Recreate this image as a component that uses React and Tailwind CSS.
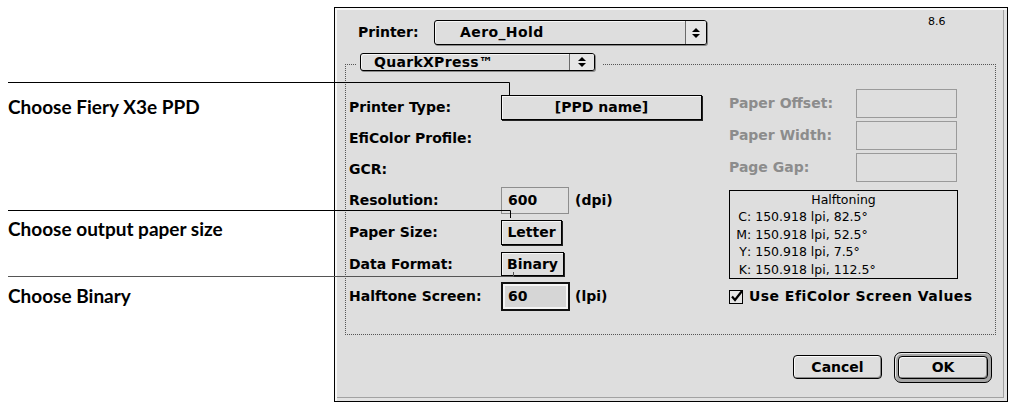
import React from 'react';

const ui = "font-['DejaVu_Sans',sans-serif] font-bold text-[14px] text-black";
const small = "font-['DejaVu_Sans',sans-serif] text-[12.5px] text-black";

function Arrows() {
  return (
    <svg width="8" height="12" viewBox="0 0 8 12">
      <polygon points="0,5 4,1 8,5" fill="#000" />
      <polygon points="0,7 4,11 8,7" fill="#000" />
    </svg>
  );
}

function Popup({ label, w, h, pad, arrowW }) {
  return (
    <div
      className={`flex ${w} ${h} rounded-[3px] border border-black bg-[#dedede] shadow-[1px_1px_0_#8a8a8a,inset_1px_1px_0_#f6f6f6]`}
    >
      <div className={`flex flex-1 items-center ${pad} ${ui}`}>{label}</div>
      <div className={`flex ${arrowW} items-center justify-center rounded-r-[2px] border-l border-[#6a6a6a] bg-[#e6e6e6]`}>
        <Arrows />
      </div>
    </div>
  );
}

function PushButton({ label, w, h }) {
  return (
    <div
      className={`flex ${w} ${h} items-center justify-center border border-black bg-[#dedede] shadow-[1px_1px_0_#222,inset_1px_1px_0_#f6f6f6] ${ui}`}
    >
      {label}
    </div>
  );
}

function Row({ h, label, children }) {
  return (
    <div className={`flex ${h} items-center`}>
      <div className={`w-[152px] ${ui}`}>{label}</div>
      {children}
    </div>
  );
}

function GrayRow({ label }) {
  return (
    <div className="flex h-[29px] items-center">
      <div className={`w-[127px] font-['DejaVu_Sans',sans-serif] text-[14px] font-bold text-[#8c8c8c]`}>{label}</div>
      <div className="h-[29px] w-[101px] border border-[#9a9a9a] bg-[#dedede]" />
    </div>
  );
}

function Screen({ k, v }) {
  return (
    <div className={`flex h-[17.5px] items-center ${small}`}>
      <span className="w-[17px] text-right">{k}</span>
      <span>: {v}</span>
    </div>
  );
}

export default function App() {
  return (
    <div className="relative flex h-[406px] w-[1012px] overflow-hidden bg-white">
      {/* callout labels */}
      <div className="w-[334px] shrink-0 pl-[8px] pt-[95px] font-['Lato',sans-serif] text-[19px] font-bold leading-[24px] text-black">
        <div>Choose Fiery X3e PPD</div>
        <div className="mt-[98px]">Choose output paper size</div>
        <div className="mt-[43px]">Choose Binary</div>
      </div>

      {/* dialog */}
      <div className="mt-[7px] flex h-[395px] w-[674px] shrink-0 flex-col border border-black bg-[#dedede] shadow-[inset_2px_2px_0_#f7f7f7,inset_-3px_-3px_0_#e2e2e2,inset_-4px_-4px_0_#a2a2a2]">
        <div className="flex pl-[23px]">
          <div className="flex pt-[12px]">
            <div className={`flex h-[25px] w-[76px] items-center ${ui}`}>Printer:</div>
            <Popup label="Aero_Hold" w="w-[273px]" h="h-[25px]" pad="pl-[25px] tracking-[0.4px]" arrowW="w-[21px]" />
          </div>
          <div className="ml-[221px] pt-[8px] font-['DejaVu_Sans',sans-serif] text-[11px] leading-[12px] text-black">8.6</div>
        </div>

        <div className="ml-[10px] mt-[19px] h-[271px] w-[651px] border border-dotted border-[#555]">
          <div className="-mt-[12px] ml-[11px] w-fit bg-[#dedede] pl-[3px] pr-[8px]">
            <Popup label="QuarkXPress™" w="w-[235px]" h="h-[18px]" pad="pl-[13px] tracking-[0.3px]" arrowW="w-[25px]" />
          </div>

          <div className="flex">
            <div className="w-[383px] pl-[3px] pt-[21px]">
              <Row h="h-[31px]" label="Printer Type:">
                <PushButton label="[PPD name]" w="w-[201px]" h="h-[25px]" />
              </Row>
              <Row h="h-[31px]" label="EfiColor Profile:" />
              <Row h="h-[30px]" label="GCR:" />
              <Row h="h-[32px]" label="Resolution:">
                <div className={`flex h-[27px] w-[68px] items-center border border-[#8e8e8e] bg-[#e0e0e0] pl-[6px] ${ui}`}>600</div>
                <span className={`ml-[6px] ${ui}`}>(dpi)</span>
              </Row>
              <Row h="h-[32px]" label="Paper Size:">
                <PushButton label="Letter" w="w-[61px]" h="h-[25px]" />
              </Row>
              <Row h="h-[32px]" label="Data Format:">
                <PushButton label="Binary" w="w-[63px]" h="h-[24px]" />
              </Row>
              <Row h="h-[32px]" label="Halftone Screen:">
                <div className={`flex h-[29px] w-[69px] items-center border-2 border-[#111] bg-[#d6d6d6] pl-[5px] shadow-[inset_0_0_0_2px_#f4f4f4] ${ui}`}>60</div>
                <span className={`ml-[5px] ${ui}`}>(lpi)</span>
              </Row>
            </div>

            <div className="pt-[18px]">
              <div className="flex flex-col gap-[3px]">
                <GrayRow label="Paper Offset:" />
                <GrayRow label="Paper Width:" />
                <GrayRow label="Page Gap:" />
              </div>
              <div className="mt-[8px] h-[89px] w-[229px] border border-black pt-[1px]">
                <div className={`flex h-[17px] items-center justify-center ${small}`}>Halftoning</div>
                <Screen k="C" v="150.918 lpi, 82.5°" />
                <Screen k="M" v="150.918 lpi, 52.5°" />
                <Screen k="Y" v="150.918 lpi, 7.5°" />
                <Screen k="K" v="150.918 lpi, 112.5°" />
              </div>
              <div className="mt-[9px] flex h-[16px] items-center">
                <svg width="15" height="15" viewBox="0 0 15 15">
                  <rect x="0.5" y="1.5" width="13" height="13" fill="#e6e6e6" stroke="#000" />
                  <path d="M3 7.5 L6 11 L13 2" fill="none" stroke="#000" strokeWidth="2.2" />
                </svg>
                <span className={`ml-[5px] tracking-[0.45px] ${ui}`}>Use EfiColor Screen Values</span>
              </div>
            </div>
          </div>
        </div>

        <div className="mt-[17px] flex items-start justify-end gap-[12px] pr-[15px]">
          <div className={`mt-[3px] flex h-[24px] w-[89px] items-center justify-center rounded-[4px] border border-black bg-[#dedede] shadow-[inset_1px_1px_0_#fafafa,inset_-1px_-1px_0_#8a8a8a] ${ui}`}>
            Cancel
          </div>
          <div className="h-[31px] w-[98px] rounded-[7px] border border-black bg-[#a6a6a6] p-[3px] shadow-[inset_1px_1px_0_#e8e8e8]">
            <div className={`flex h-full w-full items-center justify-center rounded-[4px] border border-black bg-[#dedede] shadow-[inset_1px_1px_0_#fafafa,inset_-1px_-1px_0_#8a8a8a] ${ui}`}>
              OK
            </div>
          </div>
        </div>
      </div>

      {/* leader lines */}
      <svg className="pointer-events-none absolute inset-0" width="1012" height="406">
        <path d="M8 82.5 H509.5 V96" fill="none" stroke="#000" strokeWidth="1" />
        <path d="M8 210.5 H510.5 V218" fill="none" stroke="#000" strokeWidth="1" />
        <path d="M8 276.5 H513.5 V272" fill="none" stroke="#555" strokeWidth="1" />
      </svg>
    </div>
  );
}
